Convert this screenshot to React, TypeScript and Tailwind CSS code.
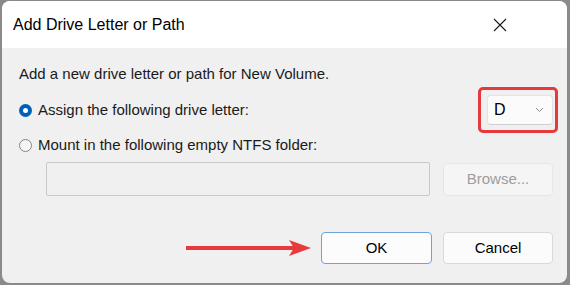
import React from "react";

const font = { fontFamily: '"Liberation Sans", Arial, sans-serif' };

const Radio = ({ checked }: { checked?: boolean }) =>
    checked ? (
        <span className="flex h-[13px] w-[13px] items-center justify-center rounded-full bg-[#005fb8]">
            <span className="h-[5px] w-[5px] rounded-full bg-white" />
        </span>
    ) : (
        <span className="h-[13px] w-[13px] rounded-full border border-[#858585] bg-[#f5f5f5]" />
    );

const App = (): React.JSX.Element => {
    return (
        <div className="h-[285px] w-[570px] overflow-hidden bg-[#8a8a8a] pl-[2px] pt-[1px]" style={font}>
            <div className="flex h-[282px] w-[565px] flex-col overflow-hidden rounded-[8px] bg-[#f0f0f0] text-[#1a1a1a]">
                {/* Barre de titre */}
                <div className="flex h-[47px] min-h-[47px] items-center justify-between bg-white pl-[11px] pr-[60px]">
                    <span className="text-[16px] text-black">Add Drive Letter or Path</span>
                    <svg width="14" height="14" viewBox="0 0 14 14" className="text-[#1a1a1a]">
                        <path d="M1 1 L13 13 M13 1 L1 13" stroke="currentColor" strokeWidth="1.1" fill="none" />
                    </svg>
                </div>

                {/* Contenu */}
                <div className="flex flex-1 flex-col pl-[17px] pr-[14px] text-[15px]">
                    <div className="mt-[16px] h-[20px] leading-[20px]">Add a new drive letter or path for New Volume.</div>

                    <div className="mt-[11px] flex h-[30px] items-center justify-between">
                        <label className="flex items-center gap-[6px]">
                            <Radio checked />
                            <span>Assign the following drive letter:</span>
                        </label>
                        <div className="relative">
                            <div className="flex h-[30px] w-[66px] items-center justify-between rounded-[4px] border border-[#e3e3e3] border-b-[#cfcfcf] bg-[#fbfbfb] pl-[6px] pr-[8px]">
                                <span className="text-[16px] text-black">D</span>
                                <svg width="9" height="6" viewBox="0 0 9 6">
                                    <path d="M1 1 L4.5 4.5 L8 1" stroke="#8a8a8a" strokeWidth="1" fill="none" />
                                </svg>
                            </div>
                            <div className="pointer-events-none absolute -bottom-[8px] -left-[9px] -right-[5px] -top-[8px] rounded-[5px] border-[3px] border-[#e5393b]" />
                        </div>
                    </div>

                    <label className="mt-[10px] flex h-[20px] items-center gap-[6px]">
                        <Radio />
                        <span>Mount in the following empty NTFS folder:</span>
                    </label>

                    <div className="mt-[7px] flex h-[34px] items-center gap-[13px] pl-[27px]">
                        <div className="h-[34px] w-[384px] rounded-[2px] border border-[#c8c8c8] bg-[#f0f0f0]" />
                        <button
                            type="button"
                            disabled
                            className="flex h-[33px] w-[110px] items-center justify-center rounded-[4px] border border-[#e6e6e6] bg-[#f5f5f5] text-[#9d9d9d]"
                        >
                            Browse...
                        </button>
                    </div>

                    <div className="mt-[36px] flex h-[32px] items-center justify-end gap-[9px]">
                        {/* Flèche d'annotation */}
                        <svg width="126" height="18" viewBox="0 0 126 18">
                            <path d="M0 7 L108 7 L108 11 L0 11 Z" fill="#e83a3a" />
                            <path d="M103 1 L125 9 L103 17 L108 9 Z" fill="#e83a3a" />
                        </svg>
                        <div className="flex gap-[11px]">
                            <button
                                type="button"
                                className="flex h-[32px] w-[111px] items-center justify-center rounded-[4px] border border-[#6ea3da] bg-[#fcfcfc] text-black"
                            >
                                OK
                            </button>
                            <button
                                type="button"
                                className="flex h-[32px] w-[110px] items-center justify-center rounded-[4px] border border-[#d9d9d9] bg-[#fbfbfb] text-black"
                            >
                                Cancel
                            </button>
                        </div>
                    </div>
                </div>
            </div>
        </div>
    );
};

export default App;
